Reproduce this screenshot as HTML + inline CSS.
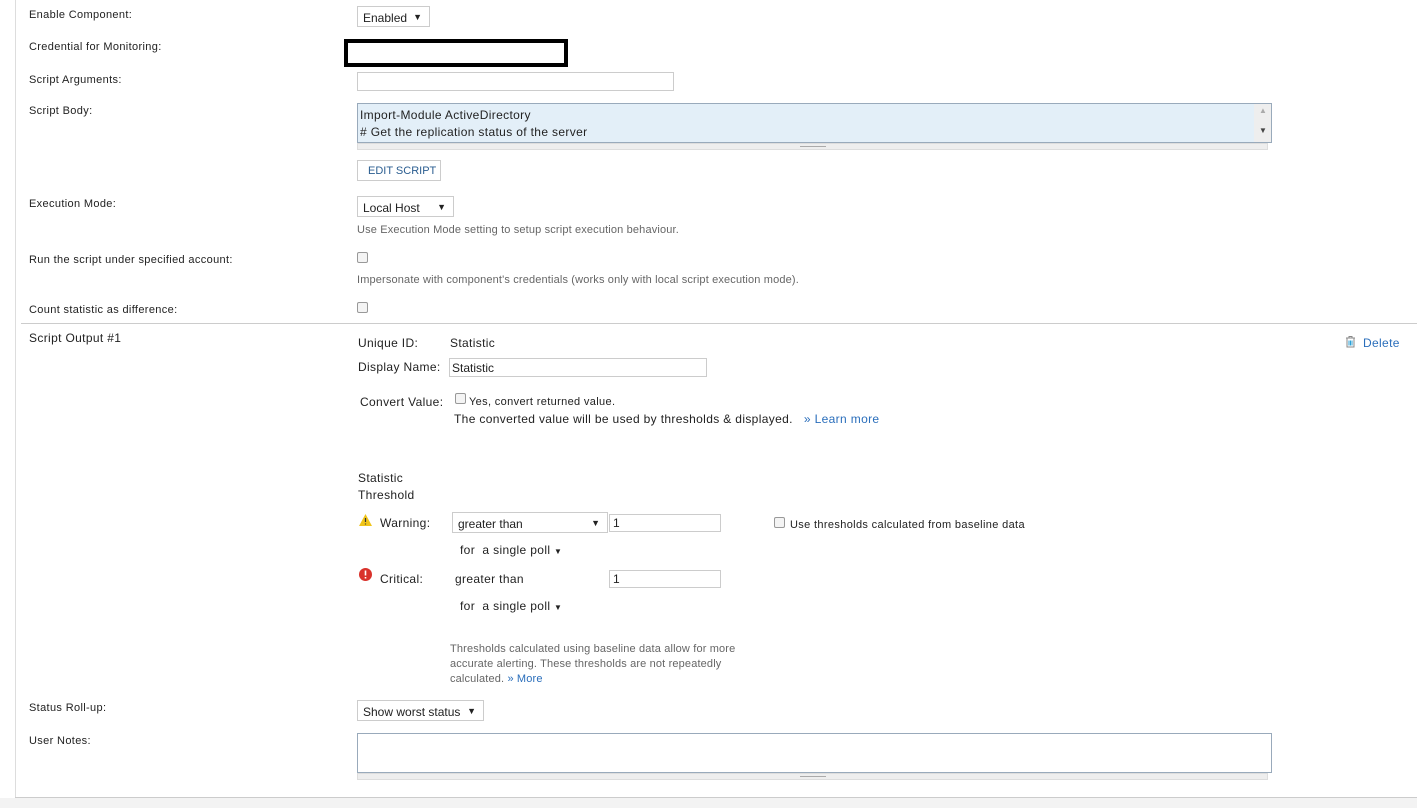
<!DOCTYPE html>
<html><head><style>
body{margin:0;width:1417px;height:808px;background:#fff;font-family:"Liberation Sans",sans-serif;color:#222;position:relative;overflow:hidden}
.a{position:absolute;white-space:nowrap}
.l{font-size:11px;color:#222;letter-spacing:0.35px}
.v{font-size:12px;color:#222;letter-spacing:0.35px}
.g{font-size:11px;color:#666;letter-spacing:0.15px}
.box{position:absolute;border:1px solid #ccc;background:#fff;box-sizing:border-box}
.cb{position:absolute;width:11px;height:11px;border:1px solid #999;border-radius:2px;background:#f4f4f4;box-sizing:border-box}
.sel{position:absolute;border:1px solid #ccc;background:#fff;box-sizing:border-box;font-size:12px;padding:4px 0 0 5px;letter-spacing:0}
.sel b{position:absolute;right:7px;top:5px;font-size:9px}
.lnk{color:#2a6ebb}
</style></head><body>
<div style="position:absolute;left:15px;top:0;width:1px;height:798px;background:#ddd"></div>
<div style="position:absolute;left:15px;top:797px;width:1402px;height:1px;background:#ccc"></div>
<div style="position:absolute;left:0;top:798px;width:1417px;height:10px;background:#f3f3f3"></div>

<div class="a l" style="left:29px;top:9px">Enable Component:</div>
<div class="sel" style="left:357px;top:6px;width:73px;height:21px">Enabled<b>▼</b></div>

<div class="a l" style="left:29px;top:41px">Credential for Monitoring:</div>
<div style="position:absolute;left:344px;top:39px;width:224px;height:28px;border:4px solid #000;box-sizing:border-box"></div>

<div class="a l" style="left:29px;top:74px">Script Arguments:</div>
<div class="box" style="left:357px;top:72px;width:317px;height:19px"></div>

<div class="a l" style="left:29px;top:105px">Script Body:</div>
<div style="position:absolute;left:357px;top:103px;width:915px;height:40px;background:#e3eff8;border:1px solid #9ab;box-sizing:border-box"></div>
<div style="position:absolute;left:1254px;top:104px;width:17px;height:38px;background:#eee"></div>
<div class="a" style="left:1259px;top:106px;font-size:8px;color:#aaa">▲</div>
<div class="a" style="left:1259px;top:126px;font-size:8px;color:#444">▼</div>
<div style="position:absolute;left:357px;top:143px;width:911px;height:7px;background:#eee;border:1px solid #ddd;box-sizing:border-box"></div>
<div style="position:absolute;left:800px;top:146px;width:26px;height:1px;background:#aaa"></div>
<div class="a v" style="left:360px;top:108px">Import-Module ActiveDirectory</div>
<div class="a v" style="left:360px;top:125px"># Get the replication status of the server</div>

<div class="box" style="left:357px;top:160px;width:84px;height:21px;font-size:11px;color:#2a5d90;padding:4px 0 0 10px">EDIT SCRIPT</div>

<div class="a l" style="left:29px;top:198px">Execution Mode:</div>
<div class="sel" style="left:357px;top:196px;width:97px;height:21px">Local Host<b>▼</b></div>
<div class="a g" style="left:357px;top:224px">Use Execution Mode setting to setup script execution behaviour.</div>

<div class="a l" style="left:29px;top:254px">Run the script under specified account:</div>
<div class="cb" style="left:357px;top:252px"></div>
<div class="a g" style="left:357px;top:274px">Impersonate with component's credentials (works only with local script execution mode).</div>

<div class="a l" style="left:29px;top:304px">Count statistic as difference:</div>
<div class="cb" style="left:357px;top:302px"></div>

<div style="position:absolute;left:21px;top:323px;width:1396px;height:1px;background:#ccc"></div>

<div class="a v" style="left:29px;top:331px">Script Output #1</div>
<div class="a v" style="left:358px;top:336px">Unique ID:</div>
<div class="a v" style="left:450px;top:336px">Statistic</div>
<div class="a v" style="left:358px;top:360px">Display Name:</div>
<div class="box" style="left:449px;top:358px;width:258px;height:19px;font-size:12px;padding:2px 0 0 2px">Statistic</div>
<svg class="a" style="left:1344px;top:335px" width="13" height="13" viewBox="0 0 13 13"><path d="M2 3h9M5 3V1.5h3V3M3 3.5v8.5h7V3.5" fill="none" stroke="#888" stroke-width="1"/><path d="M5 5.5v5M6.5 5.5v5M8 5.5v5" stroke="#2a9fd6" stroke-width="1"/></svg>
<div class="a v lnk" style="left:1363px;top:336px">Delete</div>

<div class="a v" style="left:360px;top:395px">Convert Value:</div>
<div class="cb" style="left:455px;top:393px"></div>
<div class="a l" style="left:469px;top:396px">Yes, convert returned value.</div>
<div class="a v" style="left:454px;top:412px">The converted value will be used by thresholds &amp; displayed. <span class="lnk">&nbsp; » Learn more</span></div>

<div class="a v" style="left:358px;top:471px">Statistic</div>
<div class="a v" style="left:358px;top:488px">Threshold</div>

<svg class="a" style="left:359px;top:514px" width="13" height="12" viewBox="0 0 13 12"><path d="M6.5 0L13 12H0z" fill="#f0c419"/><path d="M6.5 4v4M6.5 9.5v1" stroke="#333" stroke-width="1.2"/></svg>
<div class="a v" style="left:380px;top:516px">Warning:</div>
<div class="sel" style="left:452px;top:512px;width:156px;height:21px">greater than<b>▼</b></div>
<div class="box" style="left:609px;top:514px;width:112px;height:18px;font-size:12px;padding:1px 0 0 3px">1</div>
<div class="cb" style="left:774px;top:517px"></div>
<div class="a l" style="left:790px;top:519px">Use thresholds calculated from baseline data</div>
<div class="a v" style="left:460px;top:543px">for &nbsp;a single poll <span style="font-size:8px">▼</span></div>

<svg class="a" style="left:359px;top:568px" width="13" height="13" viewBox="0 0 13 13"><circle cx="6.5" cy="6.5" r="6.5" fill="#d9322b"/><path d="M6.5 2.5v5M6.5 9v1.5" stroke="#fff" stroke-width="1.6"/></svg>
<div class="a v" style="left:380px;top:572px">Critical:</div>
<div class="a v" style="left:455px;top:572px">greater than</div>
<div class="box" style="left:609px;top:570px;width:112px;height:18px;font-size:12px;padding:1px 0 0 3px">1</div>
<div class="a v" style="left:460px;top:599px">for &nbsp;a single poll <span style="font-size:8px">▼</span></div>

<div class="a g" style="left:450px;top:642px;line-height:15px">Thresholds calculated using baseline data allow for more<br>accurate alerting. These thresholds are not repeatedly<br>calculated. <span class="lnk">» More</span></div>

<div class="a l" style="left:29px;top:702px">Status Roll-up:</div>
<div class="sel" style="left:357px;top:700px;width:127px;height:21px">Show worst status<b>▼</b></div>

<div class="a l" style="left:29px;top:735px">User Notes:</div>
<div style="position:absolute;left:357px;top:733px;width:915px;height:40px;border:1px solid #9ab;box-sizing:border-box;background:#fff"></div>
<div style="position:absolute;left:357px;top:773px;width:911px;height:7px;background:#eee;border:1px solid #ddd;box-sizing:border-box"></div>
<div style="position:absolute;left:800px;top:776px;width:26px;height:1px;background:#aaa"></div>
</body></html>
